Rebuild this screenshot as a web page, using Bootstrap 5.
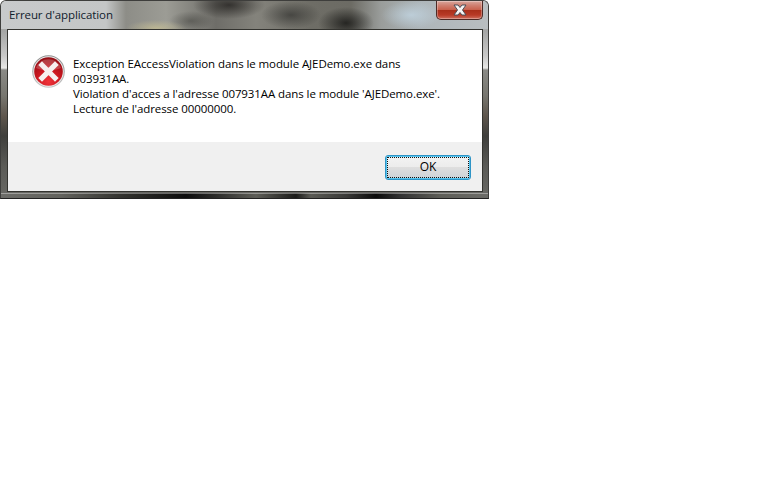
<!DOCTYPE html>
<html lang="fr">
<head>
<meta charset="utf-8">
<title>Erreur d'application</title>
<link href="https://cdn.jsdelivr.net/npm/bootstrap@5.3.0/dist/css/bootstrap.min.css" rel="stylesheet">
<style>
html,body{background:#fff;margin:0}
.aero-win{width:489px;height:199px;font-family:"Open Sans","Noto Sans",sans-serif;font-size:11.5px;letter-spacing:-.09px;line-height:15px;color:#000;
 border:1px solid #3e3e3c;border-bottom-color:#222;border-radius:6px 6px 0 0;overflow:hidden;
 background:linear-gradient(180deg,#c4c7c8 0,#a5a6a5 30px,#c9c9c8 55px,#e8e8e6 67px,#8a8a86 69px,#77766f 95px,#5e564d 115px,#3f3f3c 135px,#5a5a56 165px,#6a6a66 199px)}
.aero-bar{height:28px;padding:0 5px 0 8px;
 background:
  radial-gradient(ellipse 30px 8px at 155px 27px,rgba(215,205,150,.55),transparent),
  radial-gradient(ellipse 36px 14px at 228px 4px,rgba(30,28,26,.75),transparent),
  radial-gradient(ellipse 28px 16px at 345px 22px,rgba(20,20,18,.8),transparent),
  radial-gradient(ellipse 30px 14px at 290px 14px,rgba(40,40,38,.6),transparent),
  radial-gradient(ellipse 22px 10px at 190px 20px,rgba(50,50,46,.45),transparent),
  radial-gradient(ellipse 30px 14px at 410px 14px,rgba(195,215,228,.75),transparent),
  linear-gradient(90deg,#c8cacb 0,#c4c6c6 105px,#8d8d87 125px,#9c9c95 165px,#6e6d68 215px,#84837c 255px,#6e6d66 310px,#6c6b64 350px,#9a9d9b 380px,#aeb6ba 420px,#b9bec0 487px)}
.aero-title{font-size:11.5px;color:#10202c;padding-bottom:2px}
.aero-close{width:47px;height:19px;border:1px solid #4e2a25;border-top:0;border-radius:0 0 5px 5px;background:linear-gradient(180deg,#d9a79d 0,#cf7f70 25%,#c9624e 48%,#a92f1a 52%,#b83a26 78%,#cf6f5e 100%);box-shadow:inset 0 0 0 1px rgba(255,255,255,.3)}
.aero-close svg{display:block}
.aero-client{height:163px;margin:0 5px 0 6px;border:1px solid #33332f;background:#fff}
.aero-body{height:112px;padding:25px 10px 0 24px;gap:8px}
.aero-msg{margin:1px 0 0}
.aero-msg span{display:block;white-space:nowrap}
.aero-foot{height:49px;background:#f0f0f0;padding:13px 11px 0 0}
.aero-ok{width:86px;height:25px;padding:0;font-size:12px;line-height:18px;color:#000;font-family:inherit;border:1px solid #2f94c6;border-radius:3px;
 background:linear-gradient(180deg,#f3f3f3 0,#ececec 48%,#dedede 50%,#cdd2d7 100%);box-shadow:inset 0 0 0 1px #56c6f0}
.aero-ok:hover,.aero-ok:focus{border-color:#2f94c6;color:#000}
.aero-ok i{display:block;font-style:normal;margin:1px 1px;height:21px;border:1px dotted #111}
.aero-edge{height:5px;margin-top:1px;box-shadow:inset 0 1px 0 rgba(255,255,255,.35);
 background:linear-gradient(90deg,#6c6c68 0,#62625d 60px,#33332f 120px,#0c0c0c 185px,#2c2c2a 215px,#5e5e58 255px,#1a1a18 295px,#5b5b55 310px,#3a3a38 345px,#0a0a0a 375px,#333 400px,#5e5e58 440px,#6c6c68 487px)}
</style>
</head>
<body>
<div class="aero-win d-flex flex-column">
  <div class="aero-bar d-flex justify-content-between align-items-start">
    <div class="aero-title d-flex align-items-center h-100">Erreur d'application</div>
    <div class="aero-close d-flex align-items-center justify-content-center" aria-label="Fermer">
      <svg width="16" height="12" viewBox="0 0 16 12"><path d="M2 1h4l2 2.500L10 1h4l-3.500 5 3.500 5h-4L8 8.500 6 11H2l3.500-5z" fill="#f5f5f5" stroke="#4c4e56" stroke-width="1"/></svg>
    </div>
  </div>
  <div class="aero-client d-flex flex-column flex-shrink-0">
    <div class="aero-body d-flex align-items-start">
      <svg width="33" height="33" viewBox="0 0 33 33" class="flex-shrink-0">
        <defs>
          <radialGradient id="rg" cx="50%" cy="85%" r="80%"><stop offset="0" stop-color="#f0343a"/><stop offset=".55" stop-color="#c8161f"/><stop offset="1" stop-color="#960e15"/></radialGradient>
          <linearGradient id="rim" x1="0" y1="0" x2="0" y2="1"><stop offset="0" stop-color="#8c8c8c"/><stop offset="1" stop-color="#c8c8c8"/></linearGradient>
        </defs>
        <circle cx="16.500" cy="16.500" r="16.300" fill="url(#rim)"/>
        <circle cx="16.500" cy="16.500" r="15.200" fill="#eeeaea"/>
        <circle cx="16.500" cy="16.500" r="14.300" fill="url(#rg)"/>
        <path d="M4 13a13 12 0 0 1 25 0c-7 3-18 3-25 0z" fill="#fff" opacity=".2"/>
        <path d="M10 10l13 13M23 10L10 23" stroke="#f6f0f0" stroke-width="5.200" stroke-linecap="square" fill="none"/>
      </svg>
      <p class="aero-msg">
        <span>Exception EAccessViolation dans le module AJEDemo.exe dans</span>
        <span>003931AA.</span>
        <span>Violation d'acces a l'adresse 007931AA dans le module 'AJEDemo.exe'.</span>
        <span>Lecture de l'adresse 00000000.</span>
      </p>
    </div>
    <div class="aero-foot d-flex justify-content-end align-items-start">
      <button type="button" class="btn aero-ok"><i>OK</i></button>
    </div>
  </div>
  <div class="aero-edge"></div>
</div>
<script src="https://cdn.jsdelivr.net/npm/bootstrap@5.3.0/dist/js/bootstrap.bundle.min.js"></script>
</body>
</html>
